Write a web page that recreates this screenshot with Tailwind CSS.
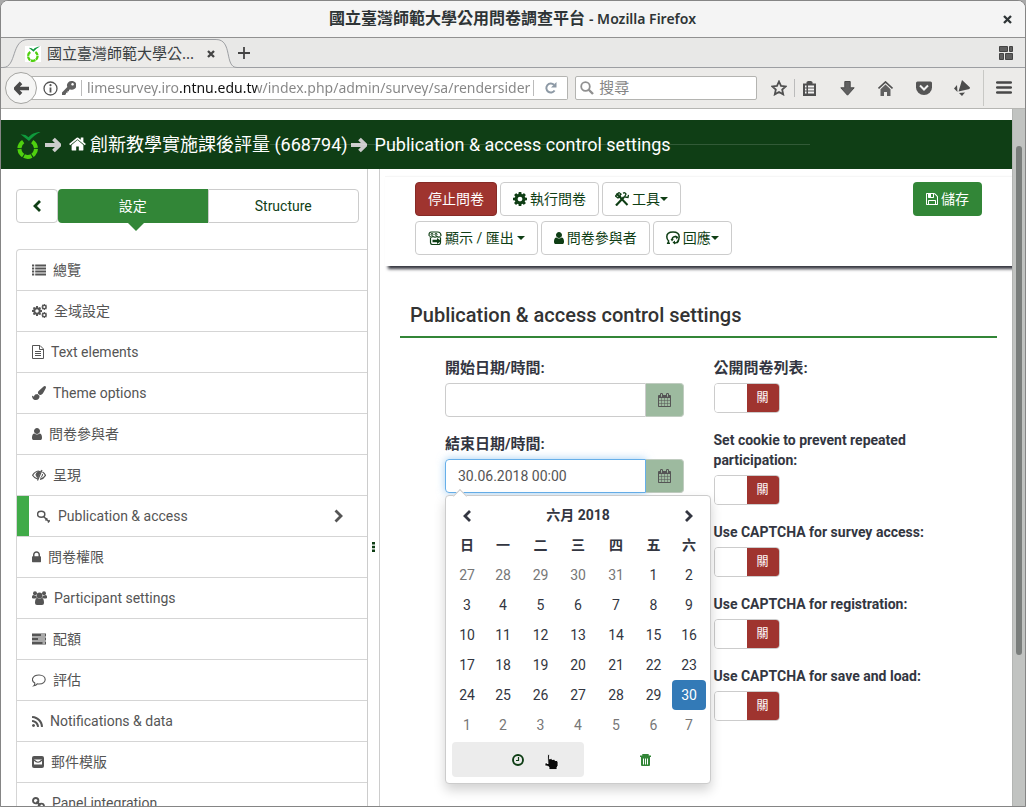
<!DOCTYPE html>
<html lang="zh-Hant">
<head>
<meta charset="utf-8">
<title>國立臺灣師範大學公用問卷調查平台</title>
<script src="https://cdn.jsdelivr.net/npm/@tailwindcss/browser@4"></script>
</head>
<body class="h-screen overflow-hidden bg-[#a9a9a9] font-[Roboto,'Noto_Sans_CJK_TC',sans-serif] text-sm text-[#333641]">

<svg width="0" height="0" class="absolute" aria-hidden="true">
  <symbol id="cog" viewBox="128 128 1536 1536"><path d="M1152 896q0-106-75-181t-181-75-181 75-75 181 75 181 181 75 181-75 75-181zm512-109v222q0 12-8 23t-20 13l-185 28q-19 54-39 91 35 50 107 138 10 12 10 25t-9 23q-27 37-99 108t-94 71q-12 0-26-9l-138-108q-44 23-91 38-16 136-29 186-7 28-36 28h-222q-14 0-24.500-8.500t-11.500-21.500l-28-184q-49-16-90-37l-141 107q-10 9-25 9-14 0-25-11-126-114-165-168-7-10-7-23 0-12 8-23 15-21 51-66.500t54-70.500q-27-50-41-99l-183-27q-13-2-21-12.500t-8-23.500v-222q0-12 8-23t19-13l186-28q14-46 39-92-40-57-107-138-10-12-10-24 0-10 9-23 26-36 98.500-107.500t94.500-71.500q13 0 26 10l138 107q44-23 91-38 16-136 29-186 7-28 36-28h222q14 0 24.500 8.500t11.500 21.500l28 184q49 16 90 37l142-107q9-9 24-9 13 0 25 10 129 119 165 170 7 8 7 22 0 12-8 23-15 21-51 66.500t-54 70.500q26 50 41 98l183 28q13 2 21 12.500t8 23.500z"/></symbol>
  <symbol id="user" viewBox="256 128 1280 1536"><path d="M1536 1399q0 109-62.500 187t-150.500 78h-854q-88 0-150.500-78t-62.500-187q0-85 8.500-160.500t31.500-152 58.500-131 94-89 134.500-34.500q131 128 313 128t313-128q76 0 134.500 34.500t94 89 58.500 131 31.500 152 8.500 160.500zm-256-887q0 159-112.500 271.500t-271.500 112.500-271.500-112.500-112.500-271.500 112.500-271.500 271.500-112.500 271.500 112.500 112.500 271.500z"/></symbol>
  <symbol id="calendar" viewBox="64 0 1664 1792"><path d="M192 1664h288v-288h-288v288zm352 0h320v-288h-320v288zm-352-352h288v-320h-288v320zm352 0h320v-320h-320v320zm-352-384h288v-288h-288v288zm736 736h320v-288h-320v288zm-384-736h320v-288h-320v288zm768 736h288v-288h-288v288zm-384-352h320v-320h-320v320zm-352-864v-288q0-13-9.500-22.500t-22.500-9.500h-64q-13 0-22.500 9.500t-9.500 22.500v288q0 13 9.500 22.500t22.500 9.500h64q13 0 22.500-9.500t9.500-22.500zm736 864h288v-320h-288v320zm-384-384h320v-288h-320v288zm384 0h288v-288h-288v288zm32-480v-288q0-13-9.500-22.500t-22.500-9.500h-64q-13 0-22.500 9.500t-9.500 22.500v288q0 13 9.500 22.500t22.500 9.500h64q13 0 22.500-9.500t9.500-22.500zm384-64v1280q0 52-38 90t-90 38h-1408q-52 0-90-38t-38-90v-1280q0-52 38-90t90-38h128v-96q0-66 47-113t113-47h64q66 0 113 47t47 113v96h384v-96q0-66 47-113t113-47h64q66 0 113 47t47 113v96h128q52 0 90 38t38 90z"/></symbol>
  <symbol id="arrow" viewBox="0 0 16 16"><path d="M8.500 2l6 6-6 6M0 8h13.500" fill="none" stroke="currentColor" stroke-width="3.800"/></symbol>
  <symbol id="lime" viewBox="0 0 26 28"><path d="M8.200 10.600A8.300 8.300 0 1 0 17.200 10.600" fill="none" stroke="#4fd00f" stroke-width="4" stroke-dasharray="7.700 1"/><path d="M5.500 3.200l5 .8 3 2.200C16 3.500 20 1 25.500 1 21 3.200 17 6.500 14 10z" fill="#0f9a3c"/></symbol>
</svg>

<div class="flex h-full flex-col overflow-hidden rounded-t-lg border border-[#858585] bg-white">

  <!-- window title -->
  <header class="flex h-[37px] shrink-0 items-center border-b border-[#919191] bg-[#f4f4f4] text-[#2e3436]">
    <h1 class="flex flex-1 items-center justify-center gap-1 pl-[35px] font-bold"><span class="text-base">國立臺灣師範大學公用問卷調查平台</span><span class="font-['Noto_Sans',sans-serif] text-sm font-semibold"> - Mozilla Firefox</span></h1>
    <button aria-label="關閉視窗" class="flex w-9 justify-center"><svg class="size-[9px]" viewBox="0 0 9 9"><path d="M1 1l7 7M8 1L1 8" stroke="#2e3436" stroke-width="2.300"/></svg></button>
  </header>

  <!-- tab strip -->
  <div class="flex h-[30px] shrink-0 items-end bg-[#e8e8e7] font-['Noto_Sans','Noto_Sans_CJK_TC',sans-serif] text-[15px] text-[#3a4043]">
    <div class="relative flex h-full w-[237px] items-center">
      <svg class="absolute inset-0 h-full w-full" viewBox="0 0 238 30" preserveAspectRatio="none"><path d="M0 29.500h2C16 29.500 10 1.500 27 1.500h189c17 0 8 28 21 28h1V30H0z" fill="#ecebe9" stroke="#9c9ea2"/></svg>
      <div class="relative flex flex-1 items-center pt-[2px] pl-6">
        <svg class="mr-1.5 size-4 bg-white"><use href="#lime"/></svg>
        <span>國立臺灣師範大學公...</span>
        <button aria-label="關閉分頁" class="ml-auto pr-[23px]"><svg class="size-2" viewBox="0 0 8 8"><path d="M1 1l6 6M7 1L1 7" stroke="#444" stroke-width="2.300"/></svg></button>
      </div>
    </div>
    <div class="flex h-full flex-1 items-center justify-between border-b border-[#9c9ea2] pr-3">
      <button aria-label="開新分頁"><svg class="size-3" viewBox="0 0 12 12"><path d="M6 0v12M0 6h12" stroke="#444" stroke-width="1.800"/></svg></button>
      <svg class="size-[14px]" viewBox="0 0 14 14" fill="#5f5f5f" stroke="#444"><path d="M.5.500h8v5h-8zM10.500.500h3v5h-3zM.5 7.500h4v6h-4zM6.500 7.500h7v6h-7z"/></svg>
    </div>
  </div>

  <!-- navigation toolbar -->
  <div class="flex h-[41px] shrink-0 items-center border-b border-[#b6b6b3] bg-[#ecebe9] pr-[13px] pl-1 font-['Noto_Sans','Noto_Sans_CJK_TC',sans-serif] text-[#555]">
    <button aria-label="上一頁" class="z-10 flex size-8 shrink-0 items-center justify-center rounded-full border border-[#a5a5a2] bg-[#f6f6f5]"><svg class="size-[15px] rotate-180 text-[#4a4a4a]"><use href="#arrow"/></svg></button>
    <div class="-ml-1.5 flex h-6 flex-[537] items-center rounded-r-xs border border-l-0 border-[#b4b4b1] bg-white pl-3">
      <svg class="size-[15px] shrink-0" viewBox="0 0 15 15"><circle cx="7.500" cy="7.500" r="6.500" fill="none" stroke="#555" stroke-width="1.300"/><path d="M7.500 6.500v5" stroke="#555" stroke-width="1.800"/><circle cx="7.500" cy="4.200" r="1.100" fill="#555"/></svg>
      <svg class="ml-1 size-[14px] shrink-0" viewBox="0 0 14 14"><path d="M9.500 0A4.400 4.400 0 1 1 8.500 8.500L7 8.800v1.400H5.500v1.500H4V13l-1 1H0v-2.600l5.300-5.300A4.400 4.400 0 0 1 9.500 0zm1 2a1.300 1.300 0 1 0 .1 0z" fill="#606060"/></svg>
      <input aria-label="網址" value="limesurvey.iro.ntnu.edu.tw/index.php/admin/survey/sa/rendersider" class="ml-[5px] h-4 w-0 min-w-0 flex-1 border-l border-[#bbb] bg-[linear-gradient(90deg,#858585_98px,#111_98px,#111_175px,#858585_175px)] bg-clip-text pl-[5px] text-[14px] text-transparent outline-none">
      <button aria-label="重新載入" class="flex h-4 w-[34px] shrink-0 items-center justify-center border-l border-[#bbb]"><svg class="size-3" viewBox="0 0 12 12"><path d="M9.600 8.500A4.500 4.500 0 1 1 9 2.800" fill="none" stroke="#8d99a5" stroke-width="2"/><path d="M11.500 0v5.500H6z" fill="#8d99a5"/></svg></button>
    </div>
    <label class="ml-[7px] flex h-6 flex-[180] items-center rounded-xs border border-[#b4b4b1] bg-white pl-1">
      <svg class="mr-[5px] size-[14px] shrink-0" viewBox="0 0 14 14" fill="none" stroke="#909090"><circle cx="5.500" cy="5.500" r="4.300" stroke-width="1.800"/><path d="M8.500 8.500l4.500 4.500" stroke-width="2.400"/></svg>
      <input aria-label="搜尋" placeholder="搜尋" class="w-full min-w-0 text-[15px] outline-none placeholder:text-[#858585]">
    </label>
    <div class="ml-[14px] flex items-center">
      <button aria-label="加入書籤"><svg class="size-4" viewBox="0 0 16 16"><path d="M8 1.500l2 4.400 4.700.5-3.500 3.200 1 4.800L8 12l-4.200 2.400 1-4.800L1.300 6.400 6 5.900z" fill="none" stroke="#505050" stroke-width="1.800"/></svg></button>
      <i class="mx-[7px] h-[18px] w-px bg-[#bbb]"></i>
      <button aria-label="書籤"><svg class="size-[15px]" viewBox="0 0 15 15"><path d="M1 2.500h3.500V1l1.500-1h3l1.500 1v1.500H14V15H1z" fill="#505050"/><path d="M3 5.500h1.500M6 5.500h6M3 8.500h1.500M6 8.500h6M3 11.500h1.500M6 11.500h6" stroke="#f4f4f4" stroke-width="1.800"/></svg></button>
      <button aria-label="下載" class="ml-[23px]"><svg class="size-[15px]" viewBox="0 0 15 15"><path d="M4.800.500h5.400v6.300h4L7.500 14.200.8 6.800h4z" fill="#606060" stroke="#4a4a4a"/></svg></button>
      <button aria-label="首頁" class="ml-[23px]"><svg class="size-[15px]" viewBox="0 0 15 15"><path d="M.5 7.500l7-6.500 7 6.500" fill="none" stroke="#505050" stroke-width="1.700"/><path d="M2.500 8.200l5-4.600 5 4.600V15H9v-4H6v4H2.500z" fill="#606060"/></svg></button>
      <button aria-label="Pocket" class="ml-[23px]"><svg class="size-4" viewBox="0 0 16 16"><path d="M1.500 1.500h13Q16 1.500 16 3v4.500a8 7.500 0 0 1-16 0V3Q0 1.500 1.500 1.500z" fill="#555"/><path d="M4 5.500l4 4 4-4" fill="none" stroke="#f2f2f2" stroke-width="2"/></svg></button>
      <button aria-label="通知" class="ml-[22px]"><svg class="size-4" viewBox="0 0 16 16" fill="#4c4c4c"><path d="M8 0l8 7.500-.5 1.500L4.500 11.500zM3 5L3.500 12 0 8.500zM5 13l6-.5L8 16z"/></svg></button>
      <i class="mr-3 ml-[13px] h-9 w-px bg-[#c8c8c5]"></i>
      <button aria-label="選單"><svg class="size-4" viewBox="0 0 16 16"><path d="M1.200 2.500h13.600M1.200 7.500h13.600M1.200 12.500h13.600" stroke="#484848" stroke-width="2.600" stroke-linecap="round"/></svg></button>
    </div>
  </div>

  <!-- web page -->
  <div class="flex min-h-0 flex-1">
    <div class="flex min-w-0 flex-1 flex-col pt-[11px]">
      <nav class="relative flex h-[49px] shrink-0 items-center bg-[#0f3e15] pl-[14px] text-[18px] text-white">
        <i class="absolute top-6 left-[269px] h-px w-[540px] bg-white/15"></i>
        <svg class="h-7 w-[26px]"><use href="#lime"/></svg>
        <svg class="ml-1 size-4 text-[#ccc]"><use href="#arrow"/></svg>
        <a href="#" class="ml-2 flex items-center gap-1">
          <svg class="h-[18px] w-[17px]" viewBox="64 128 1664 1536" fill="currentColor"><path d="M1472 992v480q0 26-19 45t-45 19h-384v-384h-256v384h-384q-26 0-45-19t-19-45v-480q0-1 .5-3t.5-3l575-474 575 474q1 2 1 6zm223-69l-62 74q-8 9-21 11h-3q-13 0-21-7l-692-577-692 577q-12 8-24 7-13-2-21-11l-62-74q-8-10-7-23.500t11-21.500l719-599q32-26 76-26t76 26l244 204v-195q0-14 9-23t23-9h192q14 0 23 9t9 23v408l219 182q10 8 11 21.500t-7 23.500z"/></svg>
          <span>創新教學實施課後評量 (668794)</span></a>
        <svg class="mr-2 ml-[3px] size-4 text-[#ccc]"><use href="#arrow"/></svg>
        <span>Publication &amp; access control settings</span>
      </nav>

      <div class="flex min-h-0 flex-1">
        <!-- sidebar -->
        <aside class="flex w-[367px] shrink-0 flex-col overflow-hidden border-r border-[#ccc] pt-5 pl-[15px]">
          <div class="mr-2 flex h-[34px] shrink-0 text-[#0f3e15]">
            <button aria-label="收合" class="flex w-[42px] items-center justify-center rounded border border-[#ccc]"><svg class="h-3 w-2" viewBox="0 0 8 12"><path d="M7 1L2 6l5 5" fill="none" stroke="currentColor" stroke-width="2.800"/></svg></button>
            <button class="relative flex-1 rounded-l bg-[#328637] text-white">設定<i class="absolute top-full left-1/2 ml-[-5px] border-x-8 border-t-8 border-x-transparent border-t-[#328637]"></i></button>
            <button class="flex-1 rounded-r border border-[#ccc]">Structure</button>
          </div>
          <ul class="mt-[26px] rounded-tl border-t border-l border-[#d5d5d5] text-[#555] [&_a]:flex [&_a]:h-10 [&_a]:items-center [&_a]:gap-[7px] [&_a]:pl-[15px] [&_li]:border-b [&_li]:border-[#d5d5d5] [&_svg]:shrink-0">
            <li><a href="#"><svg class="size-[14px]" viewBox="0 0 14 14"><path d="M0 2.500h2.200M3.200 2.500H14M0 5.500h2.200M3.200 5.500H14M0 8.500h2.200M3.200 8.500H14M0 11.500h2.200M3.200 11.500H14" stroke="currentColor" stroke-width="2"/></svg>總覽</a></li>
            <li><a href="#"><svg class="h-[14px] w-[15px]" viewBox="0 0 15 14" fill="currentColor"><use href="#cog" width="10" height="10" y="2"/><use href="#cog" width="6" height="6" x="9.300"/><use href="#cog" width="6" height="6" x="9.300" y="8"/></svg>全域設定</a></li>
            <li><a href="#"><svg class="h-[14px] w-3" viewBox="0 0 12 14" fill="none" stroke="currentColor"><path d="M.5.500H8L11.500 4v9.500H.5zM7.500.500v4h4M3 6.500h6M3 8.500h6M3 10.500h6"/></svg>Text elements</a></li>
            <li><a href="#"><svg class="size-[14px]" viewBox="0 0 1792 1792" fill="currentColor"><path d="M1615 0q70 0 122.500 46.500t52.500 116.500q0 63-45 151-332 629-465 752-97 91-218 91-126 0-216.500-92.500t-90.500-219.500q0-128 92-212l638-579q59-54 130-54zm-909 1034q39 76 106.500 130t150.500 76l1 71q4 213-129.500 347t-348.500 134q-123 0-218-46.500t-152.500-127.500-86.500-183-29-220q7 5 41 30t62 44.500 59 36.500 46 17q41 0 55-37 25-66 57.500-112.500t69.500-76 88-47.500 103-25.500 125-10.500z"/></svg>Theme options</a></li>
            <li><a href="#"><svg class="h-3 w-[10px]" fill="currentColor"><use href="#user"/></svg>問卷參與者</a></li>
            <li><a href="#"><svg class="h-3 w-[14px]" viewBox="0 0 14 12" fill="none" stroke="currentColor"><path d="M6 10.200C3.600 9.800 1.800 8.300.6 6.300 2.200 3.600 4.400 2 7.200 2M10.500 3q1.900 1.200 3 3.300-1.900 3.300-5.500 4M10 1L5.500 11.500" stroke-width="1.200"/><path d="M8.500 2.200L5.800 8.600Q4 7.500 4 5.500q.5-3 4.500-3.300z" fill="currentColor"/><path d="M10.500 5q.3 2.500-2 3.700"/></svg>呈現</a></li>
            <li class="flex"><i class="w-3 bg-[#40ab48]"></i><a href="#" class="flex-1 pl-2!"><svg class="size-[13px]" viewBox="0 0 13 13" fill="none" stroke="currentColor"><ellipse cx="4.200" cy="4.300" rx="3.600" ry="3" stroke-width="1.500"/><path d="M6.300 6.300l6 5.700M8.500 10.500l1.700-2.200M11 12.500l1.700-2.200" stroke-width="1.500"/></svg><span class="ml-px">Publication &amp; access</span><svg class="mr-6 ml-auto h-[14px] w-[9px]" viewBox="0 0 9 14"><path d="M1.500 1.500L7 7l-5.500 5.500" fill="none" stroke="currentColor" stroke-width="2.800"/></svg></a></li>
            <li><a href="#"><svg class="h-3 w-[9px]" viewBox="320 192 1152 1344" fill="currentColor"><path d="M640 768h512v-192q0-106-75-181t-181-75-181 75-75 181v192zm832 96v576q0 40-28 68t-68 28h-960q-40 0-68-28t-28-68v-576q0-40 28-68t68-28h32v-192q0-184 132-316t316-132 316 132 132 316v192h32q40 0 68 28t28 68z"/></svg>問卷權限</a></li>
            <li><a href="#"><svg class="h-[14px] w-[15px]" viewBox="0 0 15 14" fill="currentColor"><circle cx="3" cy="2.200" r="2"/><circle cx="12" cy="2.200" r="2"/><circle cx="7.500" cy="4.500" r="2.900"/><path d="M0 7V5.500Q0 4 1.500 4l3 1Q4.500 6.500 5 7l-2 .5H1zM15 7V5.500Q15 4 13.500 4l-3 1q0 1.500-.5 2l2 .5h2zM3 12q0-5 2.500-5 2 1.500 4 0 2.500 0 2.500 5 0 2-2 2H5q-2 0-2-2z"/></svg>Participant settings</a></li>
            <li><a href="#"><svg class="size-[14px]" viewBox="0 0 14 14"><path d="M0 1.500h14v3H0zM0 5.500h14v3H0zM0 9.500h14v3H0z" fill="currentColor"/><path d="M9 3h4M6 7h7M10.500 11H13" stroke="#fff"/></svg>配額</a></li>
            <li><a href="#"><svg class="size-[14px]" viewBox="0 0 14 14" fill="none" stroke="currentColor" stroke-width="1.100"><path d="M7 2c8 0 8.500 9 0 9q-1 0-1.800-.2Q4 12.300 1.800 12.800q1.200-1.200 1-2.800C-1.500 7.500.5 2 7 2z"/></svg>評估</a></li>
            <li><a href="#"><svg class="size-[11px]" viewBox="192 128 1408 1408" fill="currentColor"><path d="M576 1344q0 80-56 136t-136 56-136-56-56-136 56-136 136-56 136 56 56 136zm512 123q2 28-17 48-18 21-47 21h-135q-25 0-43-16.500t-20-41.500q-22-229-184.500-391.500t-391.500-184.500q-25-2-41.500-20t-16.500-43v-135q0-29 21-47 17-17 43-17h5q160 13 306 80.500t259 181.500q114 113 181.500 259t80.500 306zm512 2q2 27-18 47-18 20-46 20h-143q-26 0-44.500-17.500t-19.500-42.500q-12-215-101-408.500t-231.500-336-336-231.500-408.500-102q-25-1-42.500-19.500t-17.500-43.500v-143q0-28 20-46 18-18 44-18h3q262 13 501.500 120t425.500 294q187 186 294 425.500t120 501.500z"/></svg>Notifications &amp; data</a></li>
            <li><a href="#"><svg class="size-3" viewBox="0 0 12 12"><rect width="12" height="12" rx="2" fill="currentColor"/><path d="M2 3.500h8v5H2z" fill="#fff"/><path d="M2 4q4 4.500 8 0" stroke="currentColor" stroke-width="1.200" fill="none"/></svg>郵件模版</a></li>
            <li><a href="#"><svg class="size-[13px]" viewBox="0 0 13 13" fill="none" stroke="currentColor" stroke-width="1.900"><circle cx="3.700" cy="3.700" r="2.700"/><circle cx="9.300" cy="9.300" r="2.700"/><path d="M4.500 4.500l4 4"/></svg>Panel integration</a></li>
          </ul>
        </aside>
        <div class="flex w-3 shrink-0 items-center justify-center border-r border-[#ccc]">
          <svg class="mt-[118px] h-[10px] w-[3px]" viewBox="0 0 3 10" fill="#0f3e15"><path d="M0 0h3v2.500H0zM0 3.800h3v2.500H0zM0 7.500h3V10H0z"/></svg>
        </div>

        <!-- content -->
        <main class="flex min-w-0 flex-1 flex-col overflow-hidden pl-[5px]">
          <div class="mt-[7px] flex items-start border-t border-[#f6f6f6] px-[30px] pt-[5px] pb-[11px] text-[#0f3e15] shadow-[3px_3px_3px_#35363f]">
            <div class="flex w-[320px] flex-wrap gap-x-[3px] gap-y-[5px] [&>button]:flex [&>button]:h-[34px] [&>button]:items-center [&>button]:gap-[3px] [&>button]:rounded [&>button]:border [&>button]:border-[#ccc] [&>button]:px-3">
              <button class="border-[#862a26]! bg-[#9f342f] text-white">停止問卷</button>
              <button><svg class="size-[14px]" fill="currentColor"><use href="#cog"/></svg>執行問卷</button>
              <button><svg class="size-[14px]" viewBox="0 0 14 14" fill="none" stroke="currentColor"><path d="M1.500 1.500L12.500 13" stroke-width="2"/><path d="M1 13.500L9 5" stroke-width="2.200"/><path d="M8 1.200Q10 0 11 2L9.500 5l3.500.5.500-2.500M.5 4L4 .6l2 1.500-1 .6.500 2L3 6z" stroke-width="1.300"/></svg>工具<i class="ml-[-3px] border-x-4 border-t-4 border-x-transparent border-t-current"></i></button>
              <button><svg class="size-[14px]" viewBox="0 0 14 14" fill="none" stroke="currentColor"><path d="M1.200 5Q.5 1 3.500 1h6q3.500 0 3.500 4M1.500 5.500q1.500 1.300 3.500 0 2 1.300 4 0 1.500 1.300 3.500 0M2.500 7v4.500q0 2 2 2h6q2 0 2-2V6.500" stroke-width="1.200"/><circle cx="4" cy="3.400" r="1"/><circle cx="8" cy="3.400" r="1"/><path d="M4.500 8.700h4.500V7l4 3-4 3v-1.800H4.500z" fill="currentColor" stroke="none"/></svg><span>顯示 / 匯出</span><i class="border-x-4 border-t-4 border-x-transparent border-t-current"></i></button>
              <button><svg class="h-3 w-[10px]" fill="currentColor"><use href="#user"/></svg>問卷參與者</button>
              <button><svg class="size-[14px]" viewBox="0 0 14 14" fill="none" stroke="currentColor"><path d="M4 12.200H1.800L2.600 10Q.8 8.500.8 5.800.8 1 7 1t6.200 4.800Q13.200 9 11 12" stroke-width="1.500"/><path d="M6 8.500q.5-3 3.500-3l1 .3M12.500 8.500q0 3-3.500 3.500H8" stroke-width="1.500"/><path d="M9.500 4.500l3 1.500-2 2.500zM9 13.500L6.500 11.500 9 9.500zM4.500 8h3.300L6 10.500z" fill="currentColor" stroke="none"/></svg>回應<i class="ml-[-3px] border-x-4 border-t-4 border-x-transparent border-t-current"></i></button>
            </div>
            <button class="ml-auto flex h-[34px] items-center gap-[3px] rounded bg-[#328637] px-[13px] text-white"><svg class="size-3" viewBox="128 128 1536 1536" fill="currentColor"><path d="M512 1536h768v-384h-768v384zm896 0h128v-896q0-14-10-38.500t-20-34.500l-281-281q-10-10-34-20t-39-10v416q0 40-28 68t-68 28h-576q-40 0-68-28t-28-68v-416h-128v1280h128v-416q0-40 28-68t68-28h832q40 0 68 28t28 68v416zm-384-928v-320q0-13-9.500-22.500t-22.500-9.500h-192q-13 0-22.500 9.500t-9.500 22.500v320q0 13 9.500 22.500t22.500 9.500h192q13 0 22.500-9.500t9.500-22.500zm640 32v928q0 40-28 68t-68 28h-1344q-40 0-68-28t-28-68v-1344q0-40 28-68t68-28h928q40 0 88 20t76 48l280 280q28 28 48 76t20 88z"/></svg>儲存</button>
          </div>

          <form class="mx-[15px] mt-[37px]">
            <h2 class="border-b-2 border-[#328637] pb-[9px] pl-[10px] text-[20px] leading-6 font-medium text-[#333]">Publication &amp; access control settings</h2>
            <div class="mt-5 grid grid-cols-2 gap-[30px] px-[45px] leading-5 font-bold">
              <div class="flex flex-col gap-[17px]">
                <div>
                  <label for="start" class="block text-[15px]">開始日期/時間:</label>
                  <div class="mt-[5px] flex h-[34px]">
                    <input id="start" class="w-0 flex-1 rounded-l border border-[#ccc] px-3 font-normal text-[#555] outline-none">
                    <button type="button" aria-label="選擇開始日期" class="flex w-[38px] items-center justify-center rounded-r border border-l-0 border-[#c0ccc0] bg-[#9dba9f] text-[#555]"><svg class="h-[14px] w-[13px]" fill="currentColor"><use href="#calendar"/></svg></button>
                  </div>
                </div>
                <div class="relative">
                  <label for="end" class="block text-[15px]">結束日期/時間:</label>
                  <div class="mt-[5px] flex h-[34px]">
                    <input id="end" value="30.06.2018 00:00" class="w-0 flex-1 rounded-l border border-[#66afe9] px-3 font-normal text-[#555] shadow-[0_0_8px_#66afe999] outline-none">
                    <button type="button" aria-label="選擇結束日期" class="flex w-[38px] items-center justify-center rounded-r border border-l-0 border-[#c0ccc0] bg-[#9dba9f] text-[#555]"><svg class="h-[14px] w-[13px]" fill="currentColor"><use href="#calendar"/></svg></button>
                  </div>
                  <div class="absolute top-[61px] left-0 z-10 w-[266px] rounded border border-[#ccc] bg-white p-1 pb-[6px] shadow-[0_6px_12px_rgba(0,0,0,0.18)]">
                    <i class="absolute -top-[5px] left-[9px] size-[10px] rotate-45 border-t border-l border-[#ccc] bg-white"></i>
                    <table class="relative w-full table-fixed text-center">
                      <colgroup><col class="w-[34px]"><col class="w-[38px]"><col class="w-[37px]"><col class="w-[38px]"><col class="w-[38px]"><col class="w-[37px]"><col class="w-[34px]"></colgroup>
                      <thead>
                        <tr class="h-[30px]">
                          <th><button type="button" aria-label="上個月" class="px-2"><svg class="inline h-3 w-2" viewBox="0 0 8 12"><path d="M7 1L2 6l5 5" fill="none" stroke="currentColor" stroke-width="2.800"/></svg></button></th>
                          <th colspan="5">六月 2018</th>
                          <th><button type="button" aria-label="下個月" class="px-2"><svg class="inline h-3 w-2" viewBox="0 0 8 12"><path d="M1 1l5 5-5 5" fill="none" stroke="currentColor" stroke-width="2.800"/></svg></button></th>
                        </tr>
                        <tr class="h-[30px]"><th>日</th><th>一</th><th>二</th><th>三</th><th>四</th><th>五</th><th>六</th></tr>
                      </thead>
                      <tbody id="days" class="font-normal"></tbody>
                    </table>
                    <div class="mt-[2px] flex h-[35px] pl-[2px]">
                      <button type="button" aria-label="選擇時間" class="relative flex w-[132px] items-center justify-center rounded bg-[#ececec] text-[#0f3e15]">
                        <svg class="size-3" viewBox="0 0 12 12" fill="none" stroke="currentColor"><circle cx="6" cy="6" r="5" stroke-width="1.900"/><path d="M6.500 3v3.500H4" stroke-width="1.200"/></svg>
                        <svg class="absolute top-3 left-[92px] h-4 w-[15px]" viewBox="0 0 15 16"><path d="M3.500 1q1.500-1 2 .5v3.500l1.500-.5 1 1 2-.3 1 1.300h2l1 1.500V12l-1 1v2.500h-8V13L3 12H1V9h2l1 1z" fill="#0a0a0a" stroke="#fff" stroke-width=".8"/></svg>
                      </button>
                      <button type="button" aria-label="清除" class="flex flex-1 items-center justify-center text-[#328637]"><svg class="h-3 w-[11px]" viewBox="0 0 11 12"><path d="M3 2V.7h5V2M0 2.300h11" fill="none" stroke="currentColor" stroke-width="1.400"/><path d="M1 3h9v8q0 1-1 1H2q-1 0-1-1z" fill="currentColor"/><path d="M3.500 4.500v6M5.500 4.500v6M7.500 4.500v6" stroke="#fff"/></svg></button>
                    </div>
                  </div>
                </div>
              </div>

              <div class="flex flex-col gap-[17px]">
                <div><label for="s1" class="block text-[15px]">公開問卷列表:</label><div class="mt-[5px] flex h-[30px] w-[66px] overflow-hidden rounded border border-[#ccc]"><input id="s1" type="checkbox" role="switch" class="w-8 appearance-none bg-white"><span class="flex-1 bg-[#9f342f] text-center text-xs leading-7 font-normal text-white">關</span></div></div>
                <div><label for="s2" class="block">Set cookie to prevent repeated participation:</label><div class="mt-[5px] flex h-[30px] w-[66px] overflow-hidden rounded border border-[#ccc]"><input id="s2" type="checkbox" role="switch" class="w-8 appearance-none bg-white"><span class="flex-1 bg-[#9f342f] text-center text-xs leading-7 font-normal text-white">關</span></div></div>
                <div><label for="s3" class="block">Use CAPTCHA for survey access:</label><div class="mt-[5px] flex h-[30px] w-[66px] overflow-hidden rounded border border-[#ccc]"><input id="s3" type="checkbox" role="switch" class="w-8 appearance-none bg-white"><span class="flex-1 bg-[#9f342f] text-center text-xs leading-7 font-normal text-white">關</span></div></div>
                <div><label for="s4" class="block">Use CAPTCHA for registration:</label><div class="mt-[5px] flex h-[30px] w-[66px] overflow-hidden rounded border border-[#ccc]"><input id="s4" type="checkbox" role="switch" class="w-8 appearance-none bg-white"><span class="flex-1 bg-[#9f342f] text-center text-xs leading-7 font-normal text-white">關</span></div></div>
                <div><label for="s5" class="block">Use CAPTCHA for save and load:</label><div class="mt-[5px] flex h-[30px] w-[66px] overflow-hidden rounded border border-[#ccc]"><input id="s5" type="checkbox" role="switch" class="w-8 appearance-none bg-white"><span class="flex-1 bg-[#9f342f] text-center text-xs leading-7 font-normal text-white">關</span></div></div>
              </div>
            </div>
          </form>
        </main>
      </div>
    </div>
    <!-- scrollbar -->
    <div class="w-[13px] shrink-0 border-l border-[#b3b5b3] bg-[#c1c3c1] px-[3px]"><div class="mt-[37px] h-[73%] rounded-full bg-[#797d7b]"></div></div>
  </div>
</div>

<script>
  // Six weeks starting on Sunday 27 May 2018
  const first = new Date(2018, 4, 27), body = document.getElementById('days');
  for (let w = 0; w < 6; w++) {
    const row = body.insertRow();
    for (let d = 0; d < 7; d++) {
      const day = new Date(first.getFullYear(), first.getMonth(), first.getDate() + w * 7 + d);
      const june = day.getMonth() === 5;
      const button = document.createElement('button');
      button.type = 'button';
      button.textContent = day.getDate();
      button.className = june && day.getDate() === 30
        ? 'block h-[30px] w-full rounded bg-[#337ab7] text-white'
        : june ? 'block h-[30px] w-full' : 'block h-[30px] w-full text-[#777]';
      row.insertCell().append(button);
    }
  }
</script>
</body>
</html>
